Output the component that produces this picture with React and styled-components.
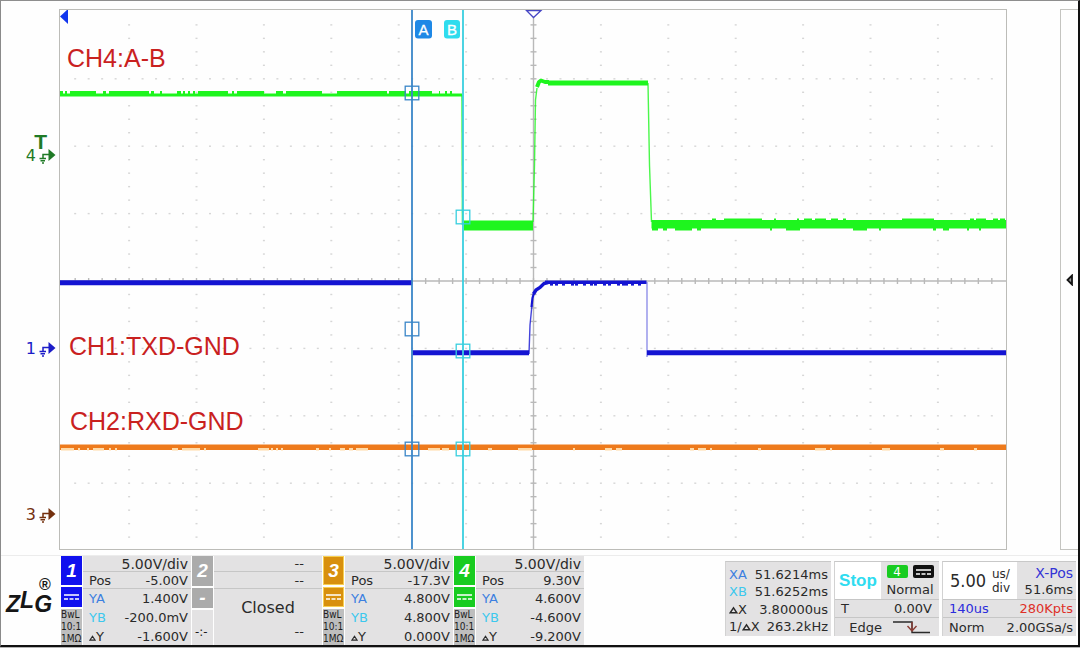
import React from 'react';
import styled, { createGlobalStyle } from 'styled-components';

const GlobalStyle = createGlobalStyle`
    *, *::before, *::after {
        box-sizing: border-box;
    }

    body {
        margin: 0;
        background-color: #b4b4b4;
        color: #2a2a2a;
        font-family: "DejaVu Sans", Verdana, sans-serif;
        font-size: 13px;
    }
`;

const Page = styled.div`
    min-height: 100vh;
    padding-bottom: 1px;
    display: flex;
    flex-direction: column;
`;

const Screen = styled.main`
    flex: 1;
    display: flex;
    flex-direction: column;
    background-color: #fefefe;
    border-top: 1px solid #8e8e8e;
    border-left: 1px solid #8a8a8a;
    border-right: 2px solid #111;
    border-bottom: 2px solid #111;
`;

const Scope = styled.section`
    display: flex;
    align-items: stretch;
    padding-top: 8px;
`;

const Gutter = styled.div`
    position: relative;
    flex: 0 0 58px;
`;

const Plot = styled.div`
    flex: 1;
    min-width: 0;
    border: 1px solid #bcbcb8;

    svg {
        display: block;
        width: 100%;
        height: auto;
    }
`;

const SidePanel = styled.div`
    flex: 0 0 18px;
    margin-left: 53px;
    display: flex;
    align-items: center;
    justify-content: center;
    border: 1px solid #c4c4c0;
    border-right: 0;
`;

const Marker = styled.div`
    position: absolute;
    right: 3px;
    top: ${props => props.$top};
    display: flex;
    align-items: center;
    gap: 3px;
    color: ${props => props.$color};
    font-size: 16px;
    line-height: 16px;
    transform: translateY(-50%);
`;

const TriggerLevel = styled(Marker)`
    right: 12px;
    font-family: "Liberation Sans", Arial, sans-serif;
    font-size: 21px;
    font-weight: bold;
`;

const StatusBar = styled.footer`
    display: flex;
    justify-content: space-between;
    margin-top: 5px;
    padding-right: 2px;
    border-top: 1px solid #ececec;
`;

const Brand = styled.div`
    flex: 0 0 60px;
    padding: 18px 0 0 3px;
`;

const Channels = styled.div`
    display: flex;
    flex: 0 0 auto;
`;

const ChannelPanel = styled.section`
    display: flex;
    gap: 1px;
    width: 131px;
    height: 89px;
    padding-right: 1px;
    background-color: #fefefe;
`;

const Side = styled.div`
    flex: 0 0 21px;
    display: flex;
    flex-direction: column;
    gap: 2px;
    color: #fff;
`;

const Badge = styled.div`
    display: flex;
    align-items: center;
    justify-content: center;
    height: ${props => (props.$tall ? '30px' : '20px')};
    background-color: ${props => props.$color};
    border: 1px solid ${props => props.$edge || props.$color};
    font-family: "Liberation Sans", Arial, sans-serif;
    font-size: 19px;
    font-style: italic;
    font-weight: bold;
`;

const Probe = styled.div`
    flex: 1;
    background-color: ${props => (props.$off ? '#e3e2e3' : '#bebebe')};
    color: #1c1c1c;
    font-family: "DejaVu Sans Condensed", "DejaVu Sans", sans-serif;
    font-size: 10px;
    line-height: 12px;
    white-space: pre;
`;

const OffMark = styled(Probe)`
    padding: 16px 0 0 3px;
    font-size: 13px;
`;

const Body = styled.div`
    flex: 1;
    background-color: #e3e2e3;
`;

const Row = styled.div`
    display: flex;
    align-items: center;
    justify-content: space-between;
    height: ${props => props.$height || 19}px;
    padding: 0 3px 0 6px;
    border-bottom: ${props => (props.$line ? '1px solid #c6c6c6' : '0')};
    white-space: nowrap;
`;

const EmptyRow = styled(Row)`
    justify-content: flex-end;
    padding-right: 18px;
`;

const Value = styled.span`
    margin-left: auto;
    color: ${props => props.$color || 'inherit'};
    font-size: ${props => props.$size || 13}px;
`;

const Label = styled.span`
    color: ${props => props.$color || 'inherit'};
`;

const Closed = styled.div`
    display: flex;
    align-items: center;
    justify-content: center;
    height: 37px;
    font-size: 16px;
`;

const Readouts = styled.div`
    display: flex;
    gap: 3px;
    padding-top: 5px;
    align-items: flex-start;
`;

const Panel = styled.section`
    width: ${props => props.$width}px;
    height: 75px;
    background-color: #e3e2e3;
    border-top: 1px solid #c8c8c8;
    border-left: 1px solid #d2d2d2;
`;

const MeasureList = styled(Panel)`
    padding-top: 3px;

    ${Row} {
        padding-left: 3px;
    }
`;

const PanelTop = styled.div`
    display: flex;
    height: 38px;
    border-bottom: 1px solid #c6c6c6;
`;

const RunState = styled.div`
    flex: 0 0 46px;
    display: flex;
    align-items: center;
    justify-content: center;
    background-color: #fff;
    color: #2fdcf0;
    font-family: "Liberation Sans", Arial, sans-serif;
    font-size: 17px;
    font-weight: bold;
`;

const Source = styled.div`
    flex: 1;
    display: flex;
    flex-direction: column;
    align-items: center;
    gap: 4px;
    padding-top: 3px;
    line-height: 16px;
`;

const Chips = styled.div`
    display: flex;
    gap: 5px;
`;

const Chip = styled.span`
    display: flex;
    align-items: center;
    justify-content: center;
    width: 21px;
    height: 13px;
    border-radius: 2px;
    background-color: ${props => props.$color};
    color: #fff;
    font-size: 12px;
`;

const TimeBase = styled.div`
    flex: 0 0 74px;
    display: flex;
    align-items: center;
    justify-content: center;
    gap: 6px;
    background-color: #fff;
    font-family: "DejaVu Sans Condensed", "DejaVu Sans", sans-serif;
    font-size: 18px;
`;

const Unit = styled.span`
    display: flex;
    flex-direction: column;
    font-family: "DejaVu Sans", sans-serif;
    font-size: 12px;
    line-height: 14px;
`;

const Position = styled.div`
    flex: 1;
    padding: 3px 3px 0 0;
    line-height: 16px;
    text-align: right;
`;

const COLORS = {
    ya: '#3c7fe0',
    yb: '#3cc8ee',
    green: '#1ef51e',
    blue: '#1414d2',
    orange: '#ee7a1c',
    cursorA: '#3a86c8',
    cursorB: '#38cfdf',
};

const CENTER_X = 533.5;
const CENTER_Y = 281;
const STEP = 13.48;

// [start, end] pairs of ripple along the traces
const CH4_UPPER = [
    [60, 63], [65, 67], [70, 96], [103, 106], [109, 149], [151, 154], [160, 162], [177, 181], [183, 185],
    [188, 190], [193, 195], [198, 228], [232, 234], [237, 264], [276, 283], [286, 322], [337, 387],
    [389, 406], [409, 432], [439, 440], [445, 447], [450, 452],
];
const CH4_LOWER_TOP = [
    [712, 716], [724, 762], [774, 776], [797, 799], [804, 812], [815, 826], [831, 838], [843, 846],
    [902, 934], [970, 974], [976, 986], [993, 998], [1000, 1005],
];
const CH4_LOWER_BOTTOM = [
    [652, 658], [663, 667], [675, 692], [697, 701], [770, 772], [786, 800], [853, 867], [879, 881],
    [933, 936], [943, 949], [967, 969], [979, 981],
];
const CH3_GAPS = [
    [61, 74], [78, 80], [87, 89], [93, 104], [109, 111], [115, 117], [172, 178], [182, 200], [204, 206],
    [258, 269], [271, 273], [276, 278], [281, 283], [316, 319], [329, 331], [340, 345], [349, 353],
    [356, 368], [428, 440], [442, 449], [488, 492], [518, 532], [573, 575], [605, 612], [616, 622],
    [690, 694], [698, 706], [710, 712], [758, 761], [815, 826], [830, 832], [882, 890], [940, 944],
    [974, 977],
];
const CH1_DIPS = [550, 555, 562, 571, 575, 583, 590, 594, 603, 608, 617, 622, 625, 631, 638];

function range(from, to) {
    return Array.from({ length: to - from + 1 }, (_, i) => from + i);
}

function Bits({ items, y, height, color }) {
    return items.map(([a, b]) => (
        <rect key={a} x={a} y={y} width={b - a} height={height} fill={color} />
    ));
}

function Graticule() {
    const dots = [];
    range(-34, 34).forEach(i => {
        range(-3, 3).forEach(row => {
            if (row !== 0) dots.push([CENTER_X + i * STEP, CENTER_Y + row * STEP * 5]);
        });
    });
    range(-19, 19).forEach(j => {
        range(-6, 6).forEach(col => {
            if (col !== 0 && j % 5 !== 0) dots.push([CENTER_X + col * STEP * 5, CENTER_Y + j * STEP]);
        });
    });
    return (
        <g>
            {dots.map(([x, y]) => (
                <rect key={`${x}-${y}`} x={x - 1} y={y - 0.7} width="2" height="1.4" fill="#d6d6d6" />
            ))}
            <g stroke="#b9b9b9" strokeWidth="1.4">
                <path d={`M60 ${CENTER_Y}H1006M${CENTER_X} 10V549`} />
                {range(-34, 34).map(i => (
                    <path key={i} d={`M${CENTER_X + i * STEP} ${CENTER_Y - 3}v6`} />
                ))}
                {range(-19, 19).map(j => (
                    <path key={j} d={`M${CENTER_X - 3} ${CENTER_Y + j * STEP}h6`} />
                ))}
            </g>
        </g>
    );
}

function Traces() {
    return (
        <g fill="none">
            <g stroke={COLORS.green}>
                <path strokeWidth="3" d="M60 95H462" />
                <path strokeWidth="1.6" opacity="0.8" d="M462 95L462.5 225" />
                <path strokeWidth="10" d="M464 225.5H533" />
                <path strokeWidth="1.4" opacity="0.8" d="M533 222L534.5 165L535.5 100L537 88" />
                <path strokeWidth="4" strokeLinejoin="round" d="M537 87L539 82L541 80.5L545 82H549" />
                <path strokeWidth="5" d="M548 83H648" />
                <path strokeWidth="1.4" opacity="0.8" d="M648 83L649.5 165L651.5 222" />
                <path strokeWidth="8.5" d="M651.5 224.3H1006" />
            </g>
            <Bits items={CH4_UPPER} y={91} height={3} color={COLORS.green} />
            <Bits items={CH4_LOWER_TOP} y={218.5} height={2} color={COLORS.green} />
            <Bits items={CH4_LOWER_BOTTOM} y={228} height={2.5} color={COLORS.green} />
            <g stroke={COLORS.blue}>
                <path strokeWidth="5" d="M60 282.8H412M412.5 352.7H529M647 352.7H1006" />
                <path strokeWidth="1.4" opacity="0.8" d="M529 354L530 325L532 305" />
                <path strokeWidth="2.2" d="M531.5 307L532.5 298L534 293" />
                <path strokeWidth="3.4" d="M533.5 294L536 290L540 287.5L544 283.5L548 282.5" />
                <path strokeWidth="3.6" d="M545 282.3H646.5" />
                <path strokeWidth="1.2" opacity="0.55" d="M647 282V357" />
            </g>
            {CH1_DIPS.map(x => (
                <rect key={x} x={x} y="283" width="3" height="2.6" fill={COLORS.blue} />
            ))}
            <path stroke={COLORS.orange} strokeWidth="5.5" d="M60 447.2H1006" />
            <Bits items={CH3_GAPS} y={448} height={2.5} color="#ffd9a6" />
        </g>
    );
}

function CursorLine({ x, color, points }) {
    return (
        <g fill="none" stroke={color}>
            <path strokeWidth="1.8" d={`M${x} 10V549`} />
            {points.map(y => (
                <rect key={y} x={x - 6.8} y={y - 6.8} width="13.6" height="13.6" strokeWidth="1.3" />
            ))}
        </g>
    );
}

function Waveform() {
    return (
        <svg viewBox="60 10 946 539" role="img" aria-label="Waveforms">
            <Graticule />
            <Traces />
            <CursorLine x={412} color={COLORS.cursorA} points={[93, 329, 449]} />
            <CursorLine x={463} color={COLORS.cursorB} points={[217, 351, 449]} />
            <path d="M60 16.5L68 9V24Z" fill="#1236ee" />
            <path d="M526.5 10.5H541L533.5 17.5Z" fill="#fff" stroke="#4646c4" strokeWidth="1.3" />
            <rect x="415" y="20" width="17" height="18.5" rx="3" fill="#1e88e6" />
            <rect x="444" y="20" width="16" height="18.5" rx="3" fill="#2fdcee" />
            <g fill="#fff" fontFamily="Liberation Sans, Arial, sans-serif" fontSize="15" textAnchor="middle">
                <text x="423.5" y="34.5" stroke="#fff" strokeWidth="0.3">A</text>
                <text x="452" y="34.5" stroke="#fff" strokeWidth="0.3">B</text>
            </g>
            <g fill="#c9211f" fontFamily="Liberation Sans, Arial, sans-serif" fontSize="25">
                <text x="67" y="67">CH4:A-B</text>
                <text x="69" y="355">CH1:TXD-GND</text>
                <text x="70" y="430">CH2:RXD-GND</text>
            </g>
        </svg>
    );
}

function GroundArrow() {
    return (
        <svg width="17" height="16" viewBox="0 0 17 16" fill="none" stroke="currentColor" strokeWidth="1.5">
            <path d="M4 10V6.5H10M0.5 10.5H7M1.5 12.7H6M3 15H5" />
            <path d="M9.5 1L16.5 7L9.5 13Z" fill="currentColor" stroke="none" />
        </svg>
    );
}

function DcIcon() {
    return (
        <svg width="17" height="8" viewBox="0 0 17 8" stroke="currentColor" strokeWidth="1.6">
            <path d="M1 2H16M1 6H5M6.5 6H10.5M12 6H16" />
        </svg>
    );
}

function Delta({ size = 6 }) {
    return (
        <svg width={size + 1} height={size} viewBox="0 0 8 7" fill="none" stroke="currentColor" strokeWidth="1.3">
            <path d="M1 6H7L4 1.5Z" />
        </svg>
    );
}

function Logo() {
    return (
        <svg width="50" height="44" viewBox="0 0 50 44" fill="#161616" role="img" aria-label="ZLG">
            <text
                x="2"
                y="38"
                fontSize="23"
                fontWeight="bold"
                fontStyle="italic"
                fontFamily="Liberation Sans Narrow, Liberation Sans, Arial, sans-serif"
            >
                Z<tspan dy="-4">L</tspan><tspan dy="4">G</tspan>
            </text>
            <text x="35" y="16" fontSize="16" fontWeight="bold" fontFamily="Liberation Sans, Arial, sans-serif">®</text>
        </svg>
    );
}

function Channel({ number, color, edge, scale, pos, ya, yb, dy }) {
    return (
        <ChannelPanel aria-label={`Channel ${number}`}>
            <Side>
                <Badge $tall $color={color} $edge={edge}>{number}</Badge>
                <Badge $color={color} $edge={edge}><DcIcon /></Badge>
                <Probe>{'BwL\n10:1\n1MΩ'}</Probe>
            </Side>
            <Body>
                <Row $height={16} $line><Value $size={14}>{scale}</Value></Row>
                <Row $height={17} $line><Label>Pos</Label><Value>{pos}</Value></Row>
                <Row><Label $color={COLORS.ya}>YA</Label><Value>{ya}</Value></Row>
                <Row><Label $color={COLORS.yb}>YB</Label><Value>{yb}</Value></Row>
                <Row $height={18}><Label><Delta />Y</Label><Value>{dy}</Value></Row>
            </Body>
        </ChannelPanel>
    );
}

function ClosedChannel({ number }) {
    return (
        <ChannelPanel aria-label={`Channel ${number}`}>
            <Side>
                <Badge $tall $color="#ababab">{number}</Badge>
                <Badge $color="#ababab">-</Badge>
                <OffMark $off>-:-</OffMark>
            </Side>
            <Body>
                <EmptyRow $height={16} $line>--</EmptyRow>
                <EmptyRow $height={17} $line>--</EmptyRow>
                <Closed>Closed</Closed>
                <EmptyRow $height={10}>--</EmptyRow>
            </Body>
        </ChannelPanel>
    );
}

function App() {
    return (
        <Page>
            <GlobalStyle />
            <Screen>
                <Scope>
                    <Gutter>
                        <TriggerLevel $top="24.6%" $color="#1f7a26">T</TriggerLevel>
                        <Marker $top="27.1%" $color="#1f7a26">4<GroundArrow /></Marker>
                        <Marker $top="62.9%" $color="#1c1cc8">1<GroundArrow /></Marker>
                        <Marker $top="93.6%" $color="#74300e">3<GroundArrow /></Marker>
                    </Gutter>
                    <Plot><Waveform /></Plot>
                    <SidePanel>
                        <svg width="8" height="12" viewBox="0 0 8 12">
                            <path d="M1.5 6L6 1.5V10.5Z" fill="#9a9a9a" stroke="#151515" strokeWidth="1.8" />
                        </svg>
                    </SidePanel>
                </Scope>
                <StatusBar>
                    <Channels>
                        <Brand><Logo /></Brand>
                        <Channel number="1" color="#1010ee" scale="5.00V/div" pos="-5.00V" ya="1.400V" yb="-200.0mV" dy="-1.600V" />
                        <ClosedChannel number="2" />
                        <Channel number="3" color="#d8900e" edge="#f7cf52" scale="5.00V/div" pos="-17.3V" ya="4.800V" yb="4.800V" dy="0.000V" />
                        <Channel number="4" color="#18cc20" scale="5.00V/div" pos="9.30V" ya="4.600V" yb="-4.600V" dy="-9.200V" />
                    </Channels>
                    <Readouts>
                        <MeasureList $width={106}>
                            <Row $height={18}><Label $color={COLORS.ya}>XA</Label><Value>51.6214ms</Value></Row>
                            <Row $height={17}><Label $color={COLORS.yb}>XB</Label><Value>51.6252ms</Value></Row>
                            <Row $height={18}><Label><Delta size={8} />X</Label><Value>3.80000us</Value></Row>
                            <Row $height={17}><Label>1/<Delta size={8} />X</Label><Value>263.2kHz</Value></Row>
                        </MeasureList>
                        <Panel $width={105}>
                            <PanelTop>
                                <RunState>Stop</RunState>
                                <Source>
                                    <Chips>
                                        <Chip $color="#18cc20">4</Chip>
                                        <Chip $color="#111"><DcIcon /></Chip>
                                    </Chips>
                                    Normal
                                </Source>
                            </PanelTop>
                            <Row $height={18} $line><Label>T</Label><Value>0.00V&nbsp;</Value></Row>
                            <Row $height={18}>
                                <Label>&nbsp;&nbsp;Edge</Label>
                                <svg width="44" height="15" viewBox="0 0 44 15" fill="none" stroke="#2a2a2a" strokeWidth="1.4">
                                    <path d="M1 2H20V12.5H38" />
                                    <path stroke="#8a3c34" d="M20 2V10M15.5 6L20 11L24.5 6" />
                                </svg>
                            </Row>
                        </Panel>
                        <Panel $width={134}>
                            <PanelTop>
                                <TimeBase>5.00<Unit><span>us/</span><span>div</span></Unit></TimeBase>
                                <Position>
                                    <Value $color="#3434d6" $size={14}>X-Pos</Value><br />
                                    51.6ms
                                </Position>
                            </PanelTop>
                            <Row $height={18} $line><Label $color="#2c2cdc">140us</Label><Value $color="#de3028">280Kpts</Value></Row>
                            <Row $height={18}><Label>Norm</Label><Value>2.00GSa/s</Value></Row>
                        </Panel>
                    </Readouts>
                </StatusBar>
            </Screen>
        </Page>
    );
}

export default App;
